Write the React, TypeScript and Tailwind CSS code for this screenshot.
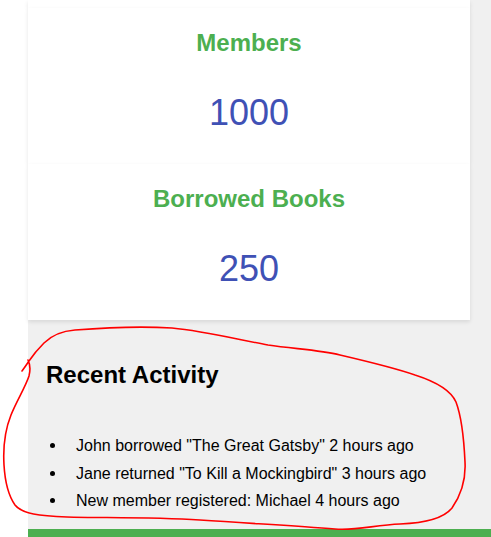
import React from "react";

const stats = [
  { label: "Members", value: "1000" },
  { label: "Borrowed Books", value: "250" },
];

const activity = [
  'John borrowed "The Great Gatsby" 2 hours ago',
  'Jane returned "To Kill a Mockingbird" 3 hours ago',
  "New member registered: Michael 4 hours ago",
];

const StatCard = ({ label, value }: { label: string; value: string }) => {
  return (
    <div className="bg-white text-center pt-[21px] pb-[31px] shadow-[0_2px_4px_rgba(0,0,0,0.1)]">
      <h2 className="text-[24px] leading-[28px] font-bold text-[#4caf50]">{label}</h2>
      <p className="mt-[35px] text-[36px] leading-[41px] text-[#3f51b5]">{value}</p>
    </div>
  );
};

const App = () => {
  return (
    <div className="relative w-[491px] h-[537px] overflow-hidden bg-white font-['Liberation_Sans',Arial,sans-serif]">
      <div className="flex h-full">
        <div className="w-[28px] shrink-0 bg-white"></div>
        <div className="flex-1 flex flex-col bg-[#f0f0f0]">
          <div className="w-[442px]">
            <div className="h-[8px] bg-white shadow-[0_2px_4px_rgba(0,0,0,0.1)]"></div>
            {stats.map((s) => (
              <StatCard key={s.label} label={s.label} value={s.value} />
            ))}
          </div>

          <div className="pl-[18px] pt-[41px]">
            <h2 className="text-[24px] leading-[28px] font-bold text-black">Recent Activity</h2>
          </div>
          <ul className="mt-[43px] pl-[22px] text-[16px] text-black">
            {activity.map((a) => (
              <li key={a} className="flex items-center leading-[27.5px]">
                <span className="w-[5px] h-[5px] rounded-full bg-black"></span>
                <span className="ml-[21px]">{a}</span>
              </li>
            ))}
          </ul>

          <div className="mt-auto h-[8px] bg-[#4caf50]"></div>
        </div>
      </div>

      {/* red hand-drawn annotation */}
      <svg className="absolute left-0 top-0 pointer-events-none" width="491" height="537" viewBox="0 0 491 537" fill="none">
        <path
          d="M22 371 C 25 367, 27 364, 29 361 C 33 355, 38 349, 44 343 C 52 335, 62 331, 75 330 C 100 328, 140 326, 172 328 C 205 331, 240 340, 268 345 C 295 349, 320 350, 340 355 C 370 362, 395 368, 415 375 C 440 383, 452 393, 456 402 C 462 418, 464 440, 465 462 C 466 480, 461 495, 452 508 C 444 518, 425 523, 400 524 C 375 525, 355 531, 335 529 C 300 526, 260 524, 200 520 C 150 517, 100 518, 67 517 C 40 516, 22 514, 15 505 C 8 495, 5 482, 4 465 C 3 448, 5 430, 11 415 C 17 400, 25 388, 29 376 C 31 368, 29 362, 28 360"
          stroke="#ff0000"
          strokeWidth="1.6"
          strokeLinecap="round"
        />
      </svg>
    </div>
  );
};

export default App;
